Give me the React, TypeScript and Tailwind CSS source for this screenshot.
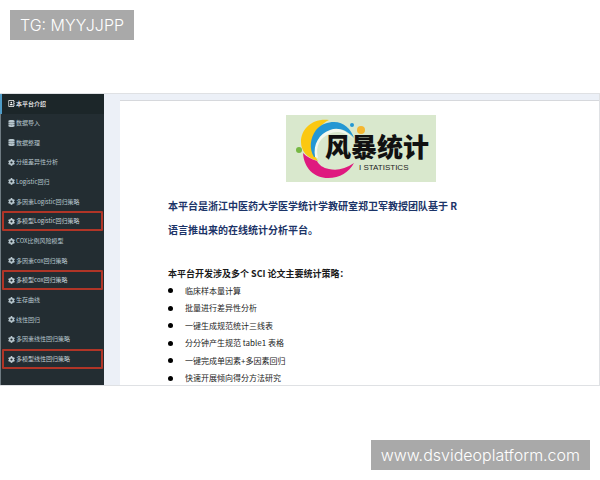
import type { IconType } from "react-icons";
import { FaCog, FaDatabase, FaRegAddressBook } from "react-icons/fa";

interface MenuItem {
  label: string;
  icon: IconType;
  active?: boolean;
  marked?: boolean;
}

const menuItems: MenuItem[] = [
  { label: "本平台介绍", icon: FaRegAddressBook, active: true },
  { label: "数据导入", icon: FaDatabase },
  { label: "数据整理", icon: FaDatabase },
  { label: "分组差异性分析", icon: FaCog },
  { label: "Logistic回归", icon: FaCog },
  { label: "多因素Logistic回归策略", icon: FaCog },
  { label: "多模型Logistic回归策略", icon: FaCog, marked: true },
  { label: "COX比例风险模型", icon: FaCog },
  { label: "多因素cox回归策略", icon: FaCog },
  { label: "多模型cox回归策略", icon: FaCog, marked: true },
  { label: "生存曲线", icon: FaCog },
  { label: "线性回归", icon: FaCog },
  { label: "多因素线性回归策略", icon: FaCog },
  { label: "多模型线性回归策略", icon: FaCog, marked: true },
];

const features: string[] = [
  "临床样本量计算",
  "批量进行差异性分析",
  "一键生成规范统计三线表",
  "分分钟产生规范 table1 表格",
  "一键完成单因素+多因素回归",
  "快速开展倾向得分方法研究",
];

function Sidebar() {
  return (
    <nav className="w-26 shrink-0 border-l border-[#6f7b82] bg-[#232d32] pb-4">
      <ul className="flex h-full flex-col">
        {menuItems.map(({ label, icon: Icon, active, marked }) => (
          <li key={label} className="flex flex-1">
            <a
              href="#"
              className={`flex flex-1 items-center gap-px whitespace-nowrap text-[6px] leading-4 ${
                active
                  ? "-ml-px border-l-2 border-[#4f9cc8] bg-[#1c2629] pl-1.5 font-medium text-white"
                  : marked
                    ? "mx-px rounded-[1px] border-2 border-[#b03527] pl-1 text-[#c3d0d6]"
                    : "pl-[7px] text-[#b8c7ce]"
              }`}
            >
              <Icon className="size-[7px] shrink-0" />
              {label}
            </a>
          </li>
        ))}
      </ul>
    </nav>
  );
}

function Logo() {
  return (
    <svg
      width="150"
      height="67"
      viewBox="0 0 150 67"
      role="img"
      aria-label="风暴统计"
      className="bg-[#d9e8cd]"
    >
      <path d="M43 5C26 3 15 14 15 27C15 36 21 43 32 46C27 39 26 31 28 24C30 15 35 9 43 5Z" fill="#fbc811" />
      <path d="M29 42C26 30 30 20 38 16C48 10 60 14 67 24C60 17 50 15 43 19C34 23 29 31 32 43Z" fill="#f4f9ee" />
      <path d="M28 42C23 34 24 23 30 15C35 9 42 7 48 7C58 7 65 14 68 23C61 15 52 12 44 15C33 19 27 29 29 42Z" fill="#2497d3" />
      <path d="M17 38C18 53 28 63 42 63C54 63 63 57 68 48C59 54 51 56 43 54C37 53 33 50 31 46C25 44 21 42 17 38Z" fill="#df197f" />
      <circle cx="66" cy="10" r="2" fill="#2497d3" />
      <circle cx="75" cy="15" r="4" fill="#f5b731" />
      <circle cx="13" cy="35" r="3" fill="#76b843" />
      <text
        x="39"
        y="42"
        fontSize="26"
        fontWeight="900"
        fill="#111111"
        className="font-['Liberation_Sans','Noto_Sans_CJK_SC',sans-serif]"
      >
        风暴统计
      </text>
      <text x="73" y="55" fontSize="8" className="font-['Liberation_Sans',sans-serif]" fill="#222222">
        I STATISTICS
      </text>
    </svg>
  );
}

export default function App() {
  return (
    <div className="bg-white font-['Noto_Sans_CJK_SC',sans-serif]">
      <header className="flex p-2.5">
        <p className="bg-[#a9a9a9] px-2.5 text-[16px] leading-[30px] text-white font-['Inter',sans-serif] font-light">
          TG: MYYJJPP
        </p>
      </header>

      <section className="mt-[43px] flex min-h-[293px] border-y border-r border-[#dfe1e4] bg-[#ecf0f7]">
        <Sidebar />
        <main className="ml-4 mt-1.5 flex flex-1 flex-col border-t border-[#d6d8dc] bg-white pl-12">
          <div className="mt-3.5 flex pl-[118px]">
            <Logo />
          </div>
          <h1 className="mt-3 text-[10px] font-bold leading-6 text-[#1c3468]">
            本平台是浙江中医药大学医学统计学教研室郑卫军教授团队基于 R
            <br />
            语言推出来的在线统计分析平台。
          </h1>
          <h2 className="mt-6 text-[9px] font-bold leading-4 text-[#1a1a1a]">
            本平台开发涉及多个 SCI 论文主要统计策略：
          </h2>
          <ul className="-mb-0.5 flex flex-1 flex-col text-[8px] leading-4 text-[#222222]">
            {features.map((feature) => (
              <li key={feature} className="flex flex-1 items-center gap-3">
                <span className="size-[5px] rounded-full bg-black" />
                {feature}
              </li>
            ))}
          </ul>
        </main>
      </section>

      <footer className="mt-[54px] flex justify-end px-2.5 pb-2.5">
        <a
          href="#"
          className="bg-[#a9a9a9] px-2.5 text-[16px] leading-[30px] text-white font-['Inter',sans-serif] font-light"
        >
          www.dsvideoplatform.com
        </a>
      </footer>
    </div>
  );
}
